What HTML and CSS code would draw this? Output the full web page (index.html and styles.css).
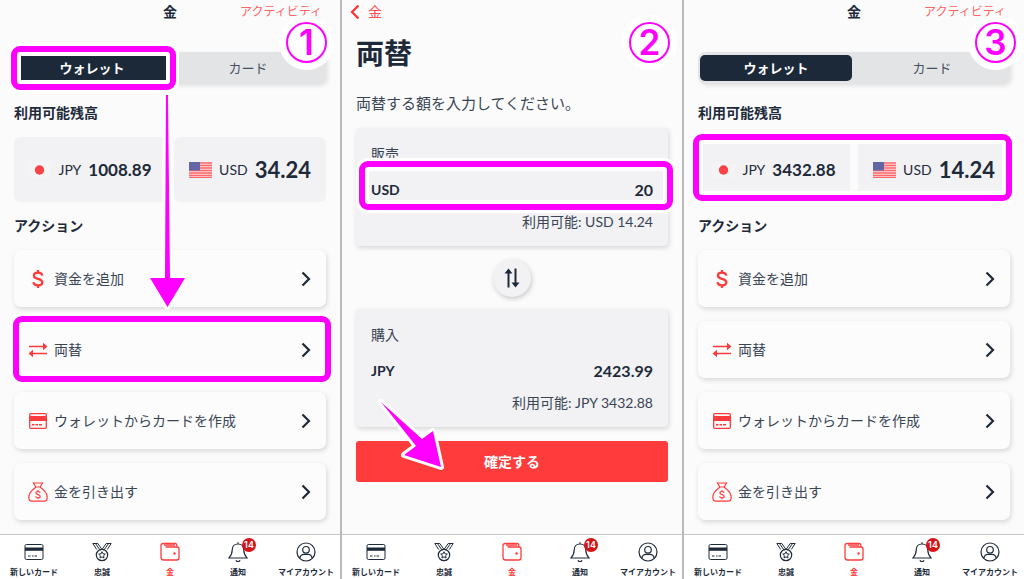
FILE: index.html
```html
<!DOCTYPE html>
<html lang="ja">
<head>
    <meta charset="UTF-8">
    <meta name="viewport" content="width=device-width, initial-scale=1.0">
    <title>両替の手順</title>
    <link rel="stylesheet" href="styles.css">
</head>
<body>
    <!-- shared icons -->
    <svg class="sprite" aria-hidden="true">
        <symbol id="chevron" viewBox="0 0 10 16"><path d="M1.5 1.5 8 8l-6.500 6.500" fill="none" stroke="currentColor" stroke-width="2.200"/></symbol>
        <symbol id="dollar" viewBox="0 0 20 20"><path d="M14.300 6.600C14 4.700 12.400 3.700 10 3.700c-2.500 0-4.100 1.100-4.100 3 0 4.300 8.400 2 8.400 6.500 0 2-1.700 3.100-4.300 3.100-2.600 0-4.300-1.200-4.500-3.200M10 1v2.700M10 16.300V19" fill="none" stroke="currentColor" stroke-width="2.300"/></symbol>
        <symbol id="exchange" viewBox="0 0 20 20"><path d="M1 6.500h15M19 13.500H4" fill="none" stroke="currentColor" stroke-width="1.700"/><path d="M15 2.700l4.500 3.800-4.500 3.800zM5 9.700.5 13.500 5 17.300z" fill="currentColor"/></symbol>
        <symbol id="card-fill" viewBox="0 0 20 20"><rect x="1.700" y="2.700" width="16.600" height="14.600" rx="1" fill="none" stroke="currentColor" stroke-width="1.300"/><path d="M1 5h18v5H1z" fill="currentColor"/><path d="M4 13.700h2.500M7.500 13.700H10M11 13.700h3" fill="none" stroke="currentColor" stroke-width="1.500"/></symbol>
        <symbol id="bag" viewBox="0 0 20 20"><path d="M5.500 1h9l-2.300 4H7.800zM7.300 5h5.400M7.800 5.200C4 7.800.8 11.500.8 15.500c0 2.300 1.200 3.600 3.200 3.600h12c2 0 3.200-1.300 3.200-3.600 0-4-3.200-7.700-7-10.300" fill="none" stroke="currentColor" stroke-width="1.200"/><path d="M12.200 10.800c-.3-.9-1.100-1.300-2.200-1.300-1.200 0-2.100.5-2.100 1.500 0 2.100 4.300 1.100 4.300 3.200 0 1-.9 1.600-2.200 1.600s-2.200-.6-2.300-1.600M10 8v1.500M10 15.800v1.500" fill="none" stroke="currentColor" stroke-width="1.200"/></symbol>
        <symbol id="card" viewBox="0 0 20 20"><rect x="1" y="2.500" width="18" height="15" rx="1.500" fill="none" stroke="currentColor"/><path d="M1 5.500h18v3.300H1z" fill="currentColor"/><path d="M4 14h2.500M8 14h1.500M10.500 14H13" fill="none" stroke="currentColor" stroke-width="1.200"/></symbol>
        <symbol id="medal" viewBox="0 0 20 20"><path d="M4.700 7.500.8 1.500h5l4.200 6 4.200-6h5l-3.900 6M3.500 1.500l4.800 7M16.500 1.500l-4.800 7" fill="none" stroke="currentColor"/><circle cx="10" cy="13" r="5.700" fill="none" stroke="currentColor" stroke-width="1.200"/><path d="m10 9.700 1 2.100 2.300.3-1.700 1.600.4 2.300-2-1.100L8 16l.4-2.300-1.700-1.600 2.300-.3z" fill="none" stroke="currentColor"/></symbol>
        <symbol id="wallet" viewBox="0 0 20 20"><path d="M16.800 5V3.200c0-1.100-.6-1.700-1.700-1.700H3.300C1.800 1.500 1 2.300 1 3.300v12C1 17 2 18 3.700 18h13c1.500 0 2.300-.8 2.300-2.300V7c0-1.300-.8-2-2.100-2H5.500M4 3.200h11" fill="none" stroke="currentColor" stroke-width="1.300"/><circle cx="14.500" cy="11.500" r="1.200" fill="currentColor"/></symbol>
        <symbol id="bell" viewBox="0 0 20 20"><path d="M10 2c-3.700 0-5.800 2.500-5.800 6 0 4.500-1.200 5.800-3.200 8h18c-2-2.200-3.200-3.500-3.200-8 0-3.500-2.100-6-5.800-6zM10 .2V2M8 18.200c.3.900 1 1.400 2 1.400s1.700-.5 2-1.400" fill="none" stroke="currentColor" stroke-width="1.200"/></symbol>
        <symbol id="person" viewBox="0 0 20 20"><g fill="none" stroke="currentColor" stroke-width="1.200"><circle cx="10" cy="10" r="9"/><circle cx="10" cy="7.800" r="3.300"/><path d="M3.800 16.400c.4-2.600 2-4 4.200-4h4c2.200 0 3.800 1.400 4.200 4"/></g></symbol>
        <symbol id="us-flag" viewBox="0 0 23 16"><rect width="23" height="16" fill="#fbdcdd"/><path d="M0 1h23M0 3.500h23M0 6h23M0 8.500h23M0 11h23M0 13.300h23M0 15.500h23" stroke="#ff686b" stroke-width="1.300"/><rect width="11" height="8.500" fill="#6266a5"/></symbol>
        <symbol id="jp-flag" viewBox="0 0 23 16"><rect width="23" height="16" fill="#f5f4f5"/><circle cx="11.500" cy="8" r="4.700" fill="#fb4347"/></symbol>
    </svg>

    <main class="steps">
        <section class="screen">
            <header class="topbar">
                <h1>金</h1>
                <a href="#" class="activity">アクティビティ</a>
            </header>
            <div class="content">
                <div class="tabs">
                    <div class="tab-slot marked">
                        <button class="tab active">ウォレット</button>
                        <span class="mark mark-tab"></span>
                    </div>
                    <div class="tab-slot"><button class="tab">カード</button></div>
                </div>
                <h2>利用可能残高</h2>
                <div class="balances">
                    <div class="balance"><svg class="flag"><use href="#jp-flag"/></svg><span>JPY</span><b>1008.89</b></div>
                    <div class="balance main"><svg class="flag"><use href="#us-flag"/></svg><span>USD</span><b>34.24</b></div>
                </div>
                <h2>アクション</h2>
                <ul class="actions">
                    <li><button class="action"><svg class="icon"><use href="#dollar"/></svg>資金を追加<svg class="chevron"><use href="#chevron"/></svg></button></li>
                    <li class="marked"><button class="action"><svg class="icon"><use href="#exchange"/></svg>両替<svg class="chevron"><use href="#chevron"/></svg></button><span class="mark mark-action"></span></li>
                    <li><button class="action"><svg class="icon"><use href="#card-fill"/></svg>ウォレットからカードを作成<svg class="chevron"><use href="#chevron"/></svg></button></li>
                    <li><button class="action"><svg class="icon"><use href="#bag"/></svg>金を引き出す<svg class="chevron"><use href="#chevron"/></svg></button></li>
                </ul>
            </div>
            <nav class="bottom-nav">
                <a href="#"><svg class="icon"><use href="#card"/></svg>新しいカード</a>
                <a href="#"><svg class="icon"><use href="#medal"/></svg>忠誠</a>
                <a href="#" class="current"><svg class="icon"><use href="#wallet"/></svg>金</a>
                <a href="#"><svg class="icon"><use href="#bell"/></svg>通知<span class="count">14</span></a>
                <a href="#"><svg class="icon"><use href="#person"/></svg>マイアカウント</a>
            </nav>
            <svg class="arrow arrow-down" viewBox="0 0 44 222"><path d="M21 5h2l2 183h15L22.500 217 5 188h15z"/></svg>
            <span class="step-no step-one">1</span>
        </section>

        <section class="screen">
            <header class="topbar">
                <a href="#" class="back"><svg class="chevron"><use href="#chevron"/></svg>金</a>
            </header>
            <div class="content">
                <h1 class="title">両替</h1>
                <p class="lead">両替する額を入力してください。</p>
                <div class="amount-card">
                    <p>販売</p>
                    <div class="amount marked">
                        <label for="sell">USD</label>
                        <input type="text" id="sell" value="20">
                        <span class="mark mark-amount"></span>
                    </div>
                    <p class="available">利用可能: USD 14.24</p>
                </div>
                <button class="swap" aria-label="入れ替え">
                    <svg viewBox="0 0 16 20"><path d="M4.500 19.500V4M11.500.5V16" fill="none" stroke="currentColor" stroke-width="2"/><path d="M.5 5.500 4.500.5l4 5zM7.500 14.500l4 5 4-5z" fill="currentColor"/></svg>
                </button>
                <div class="amount-card">
                    <p>購入</p>
                    <div class="amount">
                        <label for="buy">JPY</label>
                        <input type="text" id="buy" value="2423.99">
                    </div>
                    <p class="available">利用可能: JPY 3432.88</p>
                </div>
                <button class="confirm">確定する</button>
            </div>
            <nav class="bottom-nav">
                <a href="#"><svg class="icon"><use href="#card"/></svg>新しいカード</a>
                <a href="#"><svg class="icon"><use href="#medal"/></svg>忠誠</a>
                <a href="#" class="current"><svg class="icon"><use href="#wallet"/></svg>金</a>
                <a href="#"><svg class="icon"><use href="#bell"/></svg>通知<span class="count">14</span></a>
                <a href="#"><svg class="icon"><use href="#person"/></svg>マイアカウント</a>
            </nav>
            <svg class="arrow arrow-confirm" viewBox="0 0 74 76"><path d="m8 6 41 37 11-8 8 36-37-12 12-9z"/></svg>
            <span class="step-no step-two">2</span>
        </section>

        <section class="screen">
            <header class="topbar">
                <h1>金</h1>
                <a href="#" class="activity">アクティビティ</a>
            </header>
            <div class="content">
                <div class="tabs">
                    <div class="tab-slot"><button class="tab active">ウォレット</button></div>
                    <div class="tab-slot"><button class="tab">カード</button></div>
                </div>
                <h2>利用可能残高</h2>
                <div class="balances marked">
                    <div class="balance"><svg class="flag"><use href="#jp-flag"/></svg><span>JPY</span><b>3432.88</b></div>
                    <div class="balance main"><svg class="flag"><use href="#us-flag"/></svg><span>USD</span><b>14.24</b></div>
                    <span class="mark mark-balances"></span>
                </div>
                <h2>アクション</h2>
                <ul class="actions">
                    <li><button class="action"><svg class="icon"><use href="#dollar"/></svg>資金を追加<svg class="chevron"><use href="#chevron"/></svg></button></li>
                    <li><button class="action"><svg class="icon"><use href="#exchange"/></svg>両替<svg class="chevron"><use href="#chevron"/></svg></button></li>
                    <li><button class="action"><svg class="icon"><use href="#card-fill"/></svg>ウォレットからカードを作成<svg class="chevron"><use href="#chevron"/></svg></button></li>
                    <li><button class="action"><svg class="icon"><use href="#bag"/></svg>金を引き出す<svg class="chevron"><use href="#chevron"/></svg></button></li>
                </ul>
            </div>
            <nav class="bottom-nav">
                <a href="#"><svg class="icon"><use href="#card"/></svg>新しいカード</a>
                <a href="#"><svg class="icon"><use href="#medal"/></svg>忠誠</a>
                <a href="#" class="current"><svg class="icon"><use href="#wallet"/></svg>金</a>
                <a href="#"><svg class="icon"><use href="#bell"/></svg>通知<span class="count">14</span></a>
                <a href="#"><svg class="icon"><use href="#person"/></svg>マイアカウント</a>
            </nav>
            <span class="step-no step-three">3</span>
        </section>
    </main>
</body>
</html>
```
FILE: styles.css
```css
* {
    box-sizing: border-box;
}
body {
    margin: 0;
    background-color: #b9b9bb;
    color: #1e2a3a;
    font-family: Lato, "Noto Sans CJK JP", sans-serif;
    font-size: 14px;
    line-height: 20px;
}
h1, h2, p, ul {
    margin: 0;
    padding: 0;
}
button, input {
    font: inherit;
    color: inherit;
    border: none;
    padding: 0;
}
button {
    cursor: pointer;
}
a {
    color: inherit;
    text-decoration: none;
}
.sprite {
    position: absolute;
    width: 0;
    height: 0;
}
.steps {
    display: grid;
    grid-template-columns: repeat(3, 1fr);
    gap: 2px;
    min-height: 100vh;
}
.screen {
    position: relative;
    display: flex;
    flex-direction: column;
    min-width: 0;
    background-color: #fbfbfc;
}
.content {
    flex: 1;
    padding: 0 14px;
}

/* Top bar */
.topbar {
    display: grid;
    grid-template-columns: 1fr auto 1fr;
    align-items: center;
    height: 24px;
}
.topbar h1 {
    grid-column: 2;
    font-size: 14px;
}
.activity {
    padding-right: 18px;
    font-size: 12px;
    text-align: right;
    color: #ff6464;
}
.back {
    display: flex;
    align-items: center;
    gap: 8px;
    padding-left: 8px;
    color: #ff5053;
}
.back .chevron {
    transform: rotate(180deg);
    color: #ff3336;
}

/* Wallet / card tabs */
.tabs {
    display: grid;
    grid-template-columns: 1fr 1fr;
    margin-top: 28px;
    background-color: #e3e4e6;
    border-radius: 8px;
    box-shadow: 2px 2px 4px rgba(0, 0, 0, 0.1);
}
.tab-slot {
    padding: 3px 2px;
}
.tab {
    width: 100%;
    height: 26px;
    font-size: 13px;
    background: none;
    border-radius: 5px;
    color: #465060;
}
.tab.active {
    background-color: #1c2939;
    color: white;
    font-weight: bold;
}

h2 {
    margin: 19px 0 14px;
    font-size: 14px;
    font-weight: 700;
}
.balances + h2 {
    margin-top: 14px;
}

/* Balances */
.balances {
    display: grid;
    grid-template-columns: 1fr 1fr;
    gap: 8px;
}
.balance {
    display: flex;
    align-items: center;
    justify-content: center;
    gap: 7px;
    height: 65px;
    background-color: #f2f2f4;
    border-radius: 6px;
    white-space: nowrap;
}
.balance b {
    font-size: 17px;
}
.balance.main b {
    font-size: 22px;
}
.flag {
    width: 23px;
    height: 16px;
}

/* Actions */
.actions {
    display: grid;
    gap: 14px;
    list-style: none;
}
.action {
    display: flex;
    align-items: center;
    gap: 6px;
    width: 100%;
    height: 57px;
    padding: 0 15px 0 14px;
    background-color: #fcfcfd;
    border-radius: 7px;
    box-shadow: 1px 2px 5px rgba(0, 0, 0, 0.15);
    color: #3a4554;
}
.icon {
    width: 20px;
    height: 20px;
    color: #ff3b3b;
}
.chevron {
    width: 10px;
    height: 16px;
    color: #1e2a3a;
}
.action .chevron {
    margin-left: auto;
}

/* Exchange form */
.title {
    margin-top: 11px;
    font-size: 28px;
    line-height: 36px;
}
.lead {
    margin: 20px 0 13px;
    font-size: 15px;
    line-height: 24px;
    color: #3a4554;
}
.amount-card {
    padding: 16px 15px 14px;
    background-color: #f2f2f4;
    border-radius: 4px;
    box-shadow: 1px 2px 5px rgba(0, 0, 0, 0.15);
    color: #3a4554;
}
.amount {
    display: flex;
    align-items: center;
    height: 30px;
    margin: 11px 0 7px;
    color: #1e2a3a;
    font-weight: bold;
}
.amount input {
    flex: 1;
    min-width: 0;
    background: none;
    font-size: 16px;
    text-align: right;
}
.available {
    text-align: right;
}
.swap {
    display: grid;
    place-items: center;
    width: 38px;
    height: 38px;
    margin: 13px auto 12px;
    background-color: #f2f2f4;
    border-radius: 50%;
    box-shadow: 1px 2px 5px rgba(0, 0, 0, 0.2);
}
.swap svg {
    width: 16px;
    height: 20px;
}
.confirm {
    width: 100%;
    height: 41px;
    margin-top: 14px;
    background-color: #ff3b3b;
    border-radius: 3px;
    color: white;
    font-weight: bold;
}

/* Bottom navigation */
.bottom-nav {
    display: grid;
    grid-template-columns: repeat(5, 1fr);
    height: 45px;
    background-color: white;
    border-top: 1px solid #c6c7ca;
}
.bottom-nav a {
    position: relative;
    display: flex;
    flex-direction: column;
    align-items: center;
    gap: 4px;
    padding-top: 7px;
    font-size: 8px;
    font-weight: bold;
    line-height: 12px;
    white-space: nowrap;
}
.bottom-nav .icon {
    color: inherit;
}
.bottom-nav .current {
    color: #ff3b3b;
}
.count {
    position: absolute;
    top: 3px;
    left: 50%;
    width: 14px;
    height: 14px;
    margin-left: 4px;
    background-color: #d5141a;
    border-radius: 50%;
    color: white;
    font-family: Inter, sans-serif;
    font-size: 9px;
    font-weight: 600;
    line-height: 14px;
    text-align: center;
}

/* Guide marks drawn over the screens */
.marked {
    position: relative;
}
.mark {
    position: absolute;
    border: 6px solid #ff00ff;
    border-radius: 9px;
    box-shadow: 0 0 0 3px white, inset 0 0 0 4px white;
    pointer-events: none;
}
.mark-tab {
    inset: -6px -6px -6px -3px;
}
.mark-action {
    inset: -5px -5px -4px -1px;
}
.mark-amount {
    inset: -14px -20px -5px -12px;
}
.mark-balances {
    inset: -3px -2px 1px -5px;
}
.arrow {
    position: absolute;
    fill: #ff00ff;
    stroke: white;
    stroke-width: 6px;
    stroke-linejoin: round;
    paint-order: stroke;
    pointer-events: none;
}
.arrow-down {
    top: 90px;
    left: 145px;
    width: 44px;
    height: 222px;
}
.arrow-confirm {
    top: 396px;
    left: 31px;
    width: 74px;
    height: 76px;
}
.step-no {
    position: absolute;
    top: 22px;
    width: 41px;
    height: 41px;
    background-color: white;
    border: 2px solid #ff00ff;
    border-radius: 50%;
    box-shadow: 0 0 0 7px white;
    color: #ff00ff;
    font-family: Inter, sans-serif;
    font-size: 35px;
    font-weight: 600;
    line-height: 37px;
    text-align: center;
}
.step-one {
    right: 13px;
}
.step-two {
    right: 12px;
}
.step-three {
    right: 8px;
}
```
